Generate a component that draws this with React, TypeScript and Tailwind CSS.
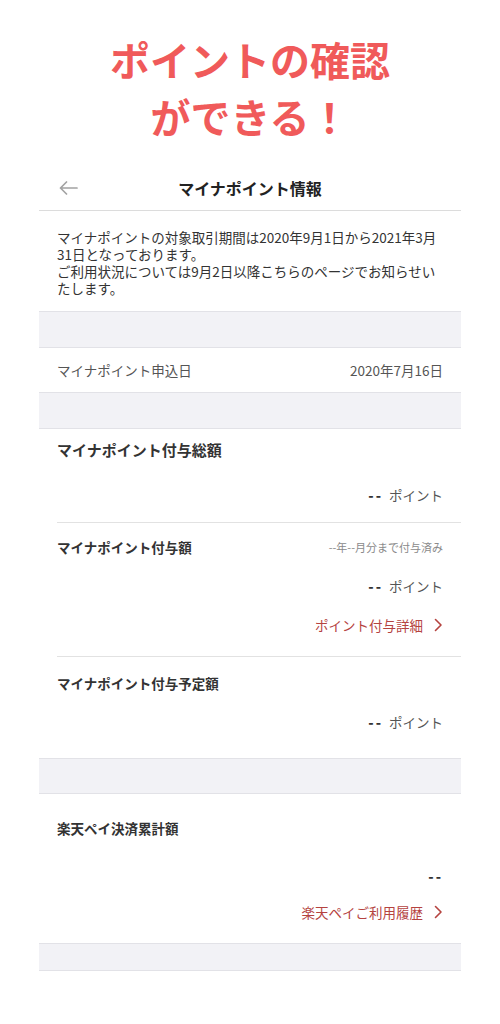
import React from 'react'

const FONT = { fontFamily: '"Noto Sans CJK JP", "Noto Sans", sans-serif' }

function Band({ h }: { h: string }) {
  return <div className={`${h} bg-[#f2f2f6] border-y border-[#e2e2e7]`} />
}

function Chevron() {
  return (
    <svg width="9" height="14" viewBox="0 0 9 14" fill="none" className="ml-[11px]">
      <path d="M1.5 1.5 7 7l-5.5 5.5" stroke="#b5433f" strokeWidth="1.6" strokeLinecap="round" strokeLinejoin="round" />
    </svg>
  )
}

function Dashes() {
  return <span className="font-black text-[#333] tracking-[2px] text-[14px]">--</span>
}

function Points() {
  return (
    <div className="flex justify-end items-center h-[20px] text-[13.5px] text-[#555]">
      <span className="mr-[6px]"><Dashes /></span>
      <span>ポイント</span>
    </div>
  )
}

function DetailLink({ label }: { label: string }) {
  return (
    <div className="flex justify-end items-center h-[20px] text-[13.5px] text-[#b5433f]">
      <span>{label}</span>
      <Chevron />
    </div>
  )
}

export default function App() {
  return (
    <div className="min-h-[1024px] bg-white" style={FONT}>
      {/* Headline */}
      <div className="pt-[31px] text-center font-bold text-[40px] leading-[57px] text-[#f05a5a]">
        <div>ポイントの確認</div>
        <div>ができる！</div>
      </div>

      {/* Phone screen */}
      <div className="mx-[39px] mt-[20px]">
        <div className="relative h-[46px] flex items-center justify-center border-b border-[#dcdcdc]">
          <svg width="19" height="14" viewBox="0 0 19 14" fill="none" className="absolute left-[20px] top-[16px]">
            <path d="M18 7H1.5M7.5 1 1.5 7l6 6" stroke="#a3a3a3" strokeWidth="1.7" strokeLinecap="round" strokeLinejoin="round" />
          </svg>
          <span className="text-[16px] font-bold text-[#222]">マイナポイント情報</span>
        </div>

        <div className="px-[18px] pt-[18px] pb-[14px] text-[13.5px] leading-[17px] text-[#333] whitespace-nowrap">
          <div>マイナポイントの対象取引期間は2020年9月1日から2021年3月</div>
          <div>31日となっております。</div>
          <div>ご利用状況については9月2日以降こちらのページでお知らせい</div>
          <div>たします。</div>
        </div>

        <Band h="h-[37px]" />

        <div className="h-[44px] px-[18px] flex items-center justify-between text-[13.5px] text-[#555]">
          <span>マイナポイント申込日</span>
          <span>2020年7月16日</span>
        </div>

        <Band h="h-[37px]" />

        {/* 付与総額 */}
        <div className="pl-[18px]">
          <div className="pr-[18px] pt-[11px] pb-[17px] border-b border-[#e2e2e2]">
            <div className="h-[20px] flex items-center text-[15px] font-bold text-[#333]">マイナポイント付与総額</div>
            <div className="mt-[25px]">
              <Points />
            </div>
          </div>

          {/* 付与額 */}
          <div className="pr-[18px] pt-[14px] pb-[21px] border-b border-[#e2e2e2]">
            <div className="h-[20px] flex items-center justify-between">
              <span className="text-[13.5px] font-bold text-[#333]">マイナポイント付与額</span>
              <span className="text-[11px] text-[#8a8a8a]">--年--月分まで付与済み</span>
            </div>
            <div className="mt-[19px]">
              <Points />
            </div>
            <div className="mt-[19px]">
              <DetailLink label="ポイント付与詳細" />
            </div>
          </div>

          {/* 付与予定額 */}
          <div className="pr-[18px] pt-[16px] pb-[26px]">
            <div className="h-[20px] flex items-center text-[13.5px] font-bold text-[#333]">マイナポイント付与予定額</div>
            <div className="mt-[19px]">
              <Points />
            </div>
          </div>
        </div>

        <Band h="h-[36px]" />

        {/* 楽天ペイ */}
        <div className="px-[18px] pt-[24px] pb-[21px]">
          <div className="h-[20px] flex items-center text-[13.5px] font-bold text-[#333]">楽天ペイ決済累計額</div>
          <div className="mt-[28px] h-[20px] flex justify-end items-center">
            <Dashes />
          </div>
          <div className="mt-[16px]">
            <DetailLink label="楽天ペイご利用履歴" />
          </div>
        </div>

        <Band h="h-[28px]" />
      </div>
    </div>
  )
}
